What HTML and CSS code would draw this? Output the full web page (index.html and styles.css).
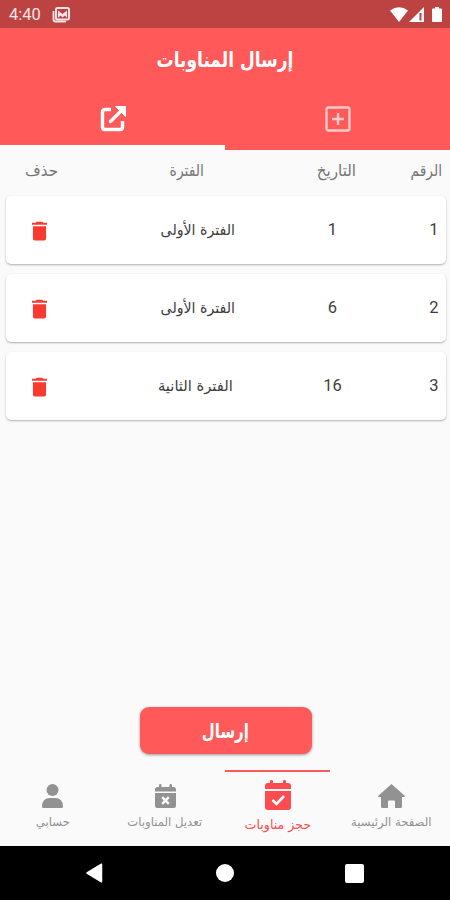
FILE: index.html
```html
<!DOCTYPE html>
<html lang="ar" dir="rtl">
<head>
    <meta charset="UTF-8">
    <title>إرسال المناوبات</title>
    <link rel="stylesheet" href="styles.css">
</head>
<body>
    <div class="status-bar">
        <span class="clock">4:40</span>
        <svg class="status-photo" width="18" height="16" viewBox="0 0 18 16">
            <path d="M1.500 4v8.500q0 2 2 2H14" fill="none" stroke="#f8e4e4" stroke-width="1.800"/>
            <rect x="4" y="1" width="13" height="11.500" rx="1.500" fill="none" stroke="#f8e4e4" stroke-width="2"/>
            <path d="M6 11V3.500l4.500 3.500L15 3.500V11l-2-2.500-2.500 2-2-2z" fill="#f8e4e4"/>
        </svg>
        <div class="status-right">
            <svg width="18" height="15" viewBox="0 0 18 15"><path d="M0 3.500Q9-3 18 3.500L9 15z" fill="#fff"/></svg>
            <svg width="15" height="15" viewBox="0 0 15 15"><path d="M0 15 15 0v15z" fill="#fff"/><path d="M11.500 6v7.500" stroke="#bd4343" stroke-width="2"/></svg>
            <svg class="battery" width="10" height="15" viewBox="0 0 10 15"><path d="M3 0h4v1.500h2q1 0 1 1V14q0 1-1 1H1q-1 0-1-1V2.500q0-1 1-1h2z" fill="#fff"/></svg>
        </div>
    </div>

    <header class="app-bar">
        <h1><span>إرسال المناوبات</span></h1>
        <div class="tabs">
            <div class="tab">
                <svg width="26" height="26" viewBox="0 0 26 26" fill="none" stroke="#ffcaca" stroke-width="2.400">
                    <rect x="1.500" y="1.500" width="23" height="23" rx="2"/>
                    <path d="M13 7v12M7 13h12"/>
                </svg>
            </div>
            <div class="tab active">
                <svg width="26" height="26" viewBox="0 0 26 26" fill="none" stroke="#fff" stroke-width="3.400">
                    <path d="M11 3.500H5q-2.500 0-2.500 2.500v15q0 2.500 2.500 2.500h15q2.500 0 2.500-2.500v-6"/>
                    <path d="M10.500 15.500 21 5" stroke-linecap="round"/>
                    <path d="M15.500 0.500h10v10z" fill="#fff" stroke="#fff" stroke-width="1" stroke-linejoin="round"/>
                </svg>
            </div>
        </div>
    </header>

    <main class="content">
        <div class="table-head">
            <span>الرقم</span>
            <span>التاريخ</span>
            <span>الفترة</span>
            <span>حذف</span>
        </div>
        <div class="card">
            <span class="num">1</span>
            <span class="date">1</span>
            <span class="period first">الفترة الأولى</span>
            <svg class="trash" width="15" height="20" viewBox="0 0 16 20"><path d="M0 1.200h4L5 0h6l1 1.200h4v2.200H0zM1 5h14v13q0 2-2 2H3q-2 0-2-2z" fill="#f83a30"/></svg>
        </div>
        <div class="card">
            <span class="num">2</span>
            <span class="date">6</span>
            <span class="period first">الفترة الأولى</span>
            <svg class="trash" width="15" height="20" viewBox="0 0 16 20"><path d="M0 1.200h4L5 0h6l1 1.200h4v2.200H0zM1 5h14v13q0 2-2 2H3q-2 0-2-2z" fill="#f83a30"/></svg>
        </div>
        <div class="card">
            <span class="num">3</span>
            <span class="date">16</span>
            <span class="period second">الفترة الثانية</span>
            <svg class="trash" width="15" height="20" viewBox="0 0 16 20"><path d="M0 1.200h4L5 0h6l1 1.200h4v2.200H0zM1 5h14v13q0 2-2 2H3q-2 0-2-2z" fill="#f83a30"/></svg>
        </div>
        <button class="send-btn"><span>إرسال</span></button>
    </main>

    <nav class="bottom-nav">
        <div class="nav-item home">
            <svg width="27" height="24" viewBox="0 0 27 24"><path d="M13.500 0 27 12q0 1-1 1h-2v9.500q0 1.500-1.500 1.500H17v-6.500q0-1-1-1h-5q-1 0-1 1V24H4.500Q3 24 3 22.500V13H1q-1 0-1-1z" fill="#929292"/></svg>
            <span>الصفحة الرئيسية</span>
        </div>
        <div class="nav-item booking active">
            <svg width="26" height="30" viewBox="0 0 26 30">
                <path d="M5 3V1q0-1 1.500-1T8 1v2h10V1q0-1 1.500-1T21 1v2h2q3 0 3 3v3H0V6q0-3 3-3z" fill="#fc4c4f"/>
                <path d="M0 11h26v16q0 3-3 3H3q-3 0-3-3z" fill="#fc4c4f"/>
                <path d="m7.500 20 4 4 7.500-8" fill="none" stroke="#fff" stroke-width="2.600"/>
            </svg>
            <span>حجز مناوبات</span>
        </div>
        <div class="nav-item edit">
            <svg width="21" height="24" viewBox="0 0 21 24">
                <path d="M4 3V1q0-1 1.200-1T6.500 1v2h8V1q0-1 1.300-1T17 1v2h1.500Q21 3 21 5.500V7.500H0v-2Q0 3 2.500 3z" fill="#929292"/>
                <path d="M0 9h21v12.500q0 2.500-2.500 2.500h-16Q0 24 0 21.500z" fill="#929292"/>
                <path d="m7.200 13.200 6.600 6.600m0-6.600-6.600 6.600" stroke="#fafafa" stroke-width="2.400"/>
            </svg>
            <span>تعديل المناوبات</span>
        </div>
        <div class="nav-item account">
            <svg width="21" height="24" viewBox="0 0 21 24"><circle cx="10.500" cy="6" r="6" fill="#929292"/><path d="M0 22.500q0-8.500 8-8.500h5q8 0 8 8.500Q21 24 19.500 24h-18Q0 24 0 22.500z" fill="#929292"/></svg>
            <span>حسابي</span>
        </div>
    </nav>

    <div class="system-bar">
        <svg width="17" height="20" viewBox="0 0 17 20"><path d="M15.500 1.200v17.600L1 10z" fill="#fff" stroke="#fff" stroke-width="1.500" stroke-linejoin="round"/></svg>
        <svg width="18" height="18" viewBox="0 0 18 18"><circle cx="9" cy="9" r="9" fill="#fff"/></svg>
        <svg width="19" height="19" viewBox="0 0 19 19"><rect width="19" height="19" rx="2" fill="#fff"/></svg>
    </div>
</body>
</html>
```

FILE: styles.css
```css
* { box-sizing: border-box; }
body {
    margin: 0;
    width: 450px;
    height: 900px;
    display: flex;
    flex-direction: column;
    overflow: hidden;
    background: #fafafa;
    font-family: "DejaVu Sans Condensed", "DejaVu Sans", sans-serif;
}
svg { display: block; flex: none; }
span { white-space: nowrap; }

.status-bar {
    direction: ltr;
    height: 28px;
    padding: 1px 8px 0 9px;
    display: flex;
    align-items: center;
    background: #bd4343;
    color: #f8e4e4;
}
.clock { font: 16.5px Roboto, sans-serif; }
.status-photo { margin-left: 11px; }
.status-right {
    margin-left: auto;
    display: flex;
    gap: 1px;
}
.battery { margin-left: 7px; }

.app-bar {
    height: 122px;
    background: #ff5959;
    color: #fff;
}
.app-bar h1 {
    height: 60px;
    margin: 0;
    padding: 4px 0 0;
    display: flex;
    align-items: center;
    justify-content: center;
    font-size: 21px;
}
.app-bar h1 span { transform: scaleX(0.9); }
.tabs { display: flex; height: 62px; }
.tab {
    flex: 1;
    display: flex;
    justify-content: center;
    padding-top: 18px;
}
.tab.active { border-bottom: 5px solid #fff; }

.content {
    flex: 1;
    padding-left: 1px;
    display: flex;
    flex-direction: column;
    align-items: center;
}
.table-head {
    width: 100%;
    height: 46px;
    padding: 0 8px 5px 0;
    display: grid;
    grid-template-columns: 86px 152px 146px 1fr;
    align-items: center;
    color: #757575;
    font-size: 16px;
}
.table-head span {
    transform: scaleX(1.05);
    transform-origin: right;
}
.table-head span:first-child { transform: scaleX(0.96); }
.table-head span:nth-child(3) { transform: scaleX(0.97); }
.card {
    width: 440px;
    height: 68px;
    margin: 0 0 10px;
    padding: 0 7px 0 0;
    display: grid;
    grid-template-columns: 81px 50px 73px 188px 1fr;
    align-items: center;
    background: #fff;
    border-radius: 5px;
    box-shadow: 0 1px 2px rgba(0, 0, 0, 0.3);
    color: #3d3d3d;
    font-size: 15px;
}
.num, .date {
    padding-bottom: 2px;
    font: 16.5px Roboto, sans-serif;
}
.date { text-align: center; }
.period {
    grid-column: 4;
    transform-origin: right;
}
.period.first { transform: scaleX(1.05); }
.period.second {
    padding-right: 2px;
    transform: scaleX(1.09);
}
.trash { margin-top: 1px; }
.send-btn {
    width: 172px;
    height: 47px;
    margin-top: auto;
    margin-bottom: 16px;
    border: none;
    border-radius: 9px;
    background: #ff5959;
    box-shadow: 0 1px 3px rgba(0, 0, 0, 0.4);
    color: #fff;
    font: bold 20px "DejaVu Sans Condensed", "DejaVu Sans", sans-serif;
}
.send-btn span {
    display: inline-block;
    transform: scaleX(0.83);
}

.bottom-nav {
    height: 76px;
    display: flex;
    color: #929292;
    font-size: 12px;
}
.nav-item {
    padding-top: 14px;
    display: flex;
    flex: none;
    flex-direction: column;
    align-items: center;
    gap: 7px;
}
.nav-item span { transform: scaleX(1.08); }
.nav-item.home { width: 120px; padding-left: 2px; }
.nav-item.edit { width: 120px; }
.nav-item.account { width: 105px; }
.nav-item.active {
    width: 105px;
    padding-top: 8px;
    border-top: 2px solid #ff5959;
    color: #fc4c4f;
    font-size: 13px;
}
.system-bar {
    direction: ltr;
    height: 54px;
    padding: 0 86px;
    display: flex;
    align-items: center;
    justify-content: space-between;
    background: #000;
}
.system-bar svg:nth-child(2) { margin-left: 2px; }
```
